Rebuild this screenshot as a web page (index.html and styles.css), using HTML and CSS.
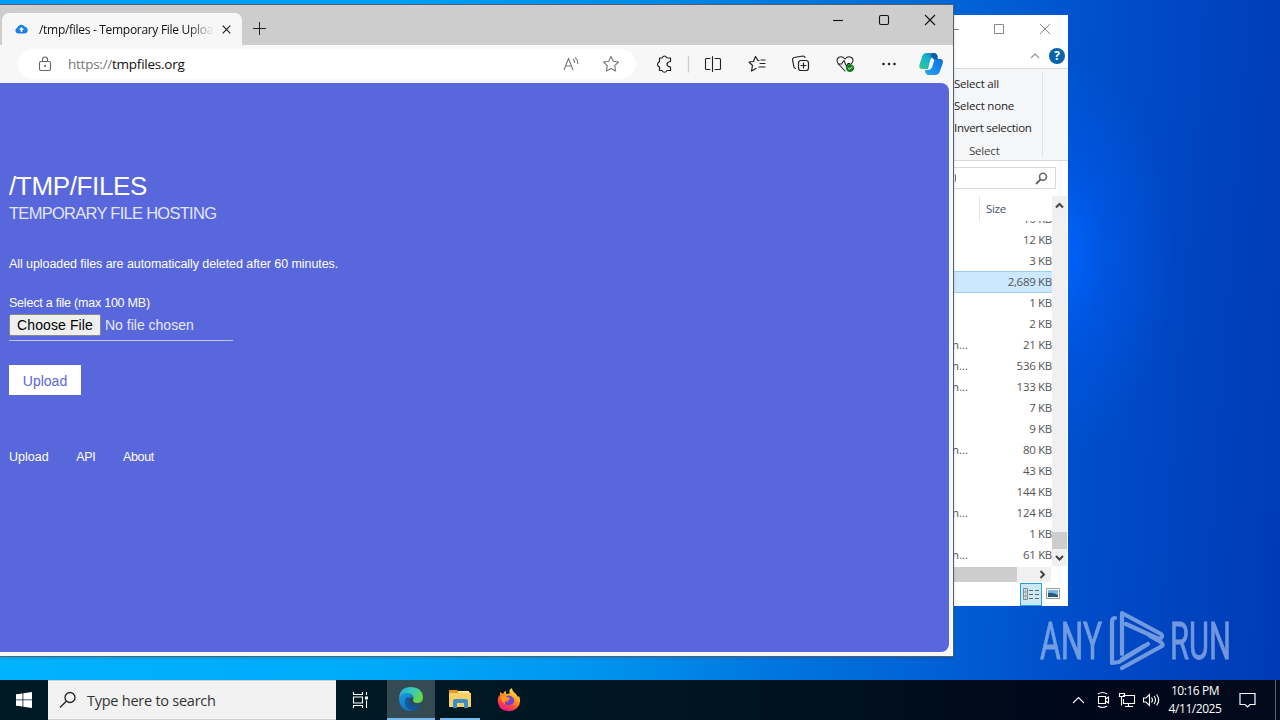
FILE: index.html
```html
<!DOCTYPE html>
<html lang="en">

<head>
  <meta charset="UTF-8" />
  <meta name="viewport" content="width=device-width, initial-scale=1.0" />
  <title>/tmp/files - Temporary File Upload</title>
  <link rel="stylesheet" href="styles.css">
</head>

<body>
  <div class="desktop">

    <!-- watermark -->
    <svg class="watermark" width="200" height="66" viewBox="0 0 200 66">
      <text x="5" y="51" textLength="62" lengthAdjust="spacingAndGlyphs">ANY</text>
      <g fill="none" stroke-width="4.200" stroke-linejoin="round" stroke-linecap="round">
        <path d="M87 46V5L126 26Q129 29 124 31L91 16" />
        <path d="M80 10Q77 10 77 14V55L84 54 113 36" />
        <path d="M87 60L127 38Q129 36 124 33L115 28M87 51L109 38" />
      </g>
      <text x="135" y="51" textLength="61" lengthAdjust="spacingAndGlyphs">RUN</text>
    </svg>

    <!-- file explorer -->
    <section class="explorer">
      <div class="explorer-title">
        <svg width="114" height="29" fill="none" stroke="#888">
          <path d="M0 14.500H5M40.500 9.500H49.500V18.500H40.500ZM86 9L96 19M96 9L86 19" />
        </svg>
      </div>
      <div class="explorer-tabs">
        <svg width="10" height="6" viewBox="0 0 10 6" fill="none" stroke="#999" stroke-width="1.300"><path d="M1 5L5 1L9 5" /></svg>
        <span class="help">?</span>
      </div>
      <div class="ribbon">
        <div class="ribbon-group">
          <span>Select all</span>
          <span>Select none</span>
          <span class="invert">Invert selection</span>
          <span class="group-name">Select</span>
        </div>
      </div>
      <div class="explorer-search">
        <div class="search-box">
          <span class="refresh"></span>
          <svg width="13" height="13" viewBox="0 0 13 13" fill="none" stroke="#666" stroke-width="1.600"><circle cx="8" cy="4.800" r="3.500" /><path d="M5.500 7.500L1 12" stroke-width="2" /></svg>
        </div>
      </div>
      <div class="file-area">
        <div class="files">
          <div class="files-head"><span>Size</span></div>
          <div class="files-list">
            <div class="row"><span></span><span>10 KB</span></div>
            <div class="row"><span></span><span>12 KB</span></div>
            <div class="row"><span></span><span>3 KB</span></div>
            <div class="row selected"><span></span><span>2,689 KB</span></div>
            <div class="row"><span></span><span>1 KB</span></div>
            <div class="row"><span></span><span>2 KB</span></div>
            <div class="row"><span>n...</span><span>21 KB</span></div>
            <div class="row"><span>n...</span><span>536 KB</span></div>
            <div class="row"><span>n...</span><span>133 KB</span></div>
            <div class="row"><span></span><span>7 KB</span></div>
            <div class="row"><span></span><span>9 KB</span></div>
            <div class="row"><span>n...</span><span>80 KB</span></div>
            <div class="row"><span></span><span>43 KB</span></div>
            <div class="row"><span></span><span>144 KB</span></div>
            <div class="row"><span>n...</span><span>124 KB</span></div>
            <div class="row"><span></span><span>1 KB</span></div>
            <div class="row"><span>n...</span><span>61 KB</span></div>
          </div>
        </div>
        <div class="vscroll">
          <svg width="15" height="17" fill="none" stroke="#444" stroke-width="2"><path d="M4 11.500L7.500 8L11 11.500" /></svg>
          <div class="vthumb"></div>
          <svg width="15" height="17" fill="none" stroke="#444" stroke-width="2"><path d="M4 7L7.500 10.500L11 7" /></svg>
        </div>
      </div>
      <div class="hscroll">
        <div class="hthumb"></div>
        <svg width="34" height="15" fill="none" stroke="#444" stroke-width="2"><path d="M23.500 4L27 7.500L23.500 11" /></svg>
      </div>
      <div class="explorer-status">
        <span class="view-btn">
          <svg width="18" height="14" viewBox="0 0 18 14" fill="none" stroke="#888"><path d="M1.500 1.500H5.500V12.500H1.500ZM1.500 5H5.500M1.500 9H5.500M3 3.300H4M3 7H4M3 11H4" /><path d="M7 3.500H11M13 3.500H17M7 7.500H11M13 7.500H17M7 11.500H11M13 11.500H17" stroke="#666" /></svg>
        </span>
        <svg width="14" height="12" viewBox="0 0 14 12"><path d="M.5.5H13.500V10.500H.5Z" fill="#fff" stroke="#999" /><path d="M2 2H12V9H2Z" fill="#7eb6e4" /><path d="M2 5Q6 4 12 7V9H2Z" fill="#285a78" /></svg>
      </div>
    </section>

    <!-- browser -->
    <section class="browser">
      <div class="tab-strip">
        <div class="tab">
          <svg class="favicon" width="13" height="12" viewBox="0 0 13 12"><path d="M3.200 10.500A3 3 0 0 1 2.300 4.700A4 4 0 0 1 9.700 3.800A3.400 3.400 0 0 1 10 10.500Z" fill="#1a80e5" /><path d="M6.500 4L9 6.800H7.300V9H5.700V6.800H4Z" fill="#fff" /></svg>
          <span class="tab-title">/tmp/files - Temporary File Upload</span>
          <svg class="tab-close" width="9" height="9" viewBox="0 0 9 9" stroke="#222" stroke-width="1.200"><path d="M.7.7L8.300 8.300M8.300.7L.7 8.300" /></svg>
        </div>
        <svg class="new-tab" width="15" height="15" stroke="#222" stroke-width="1"><path d="M7.500 1V14M1 7.500H14" /></svg>
        <svg class="window-buttons" width="124" height="30" fill="none" stroke="#111" stroke-width="1.100">
          <path d="M4 15.500H14" />
          <rect x="50.500" y="10.500" width="9" height="9" rx="1.500" />
          <path d="M96 10L106 20M106 10L96 20" />
        </svg>
      </div>

      <div class="toolbar">
        <div class="address">
          <svg class="lock" width="14" height="16" viewBox="0 0 14 16" fill="none" stroke="#666" stroke-width="1.100"><rect x="1.500" y="5.500" width="11" height="9" rx="1.500" /><path d="M4.500 5.500V3.500A2.500 2.500 0 0 1 9.500 3.500V5.500" /><circle cx="7" cy="10" r=".5" fill="#555" /></svg>
          <span class="url"><span>https://</span>tmpfiles.org</span>
          <svg class="read" width="17" height="16" viewBox="0 0 17 16" fill="none" stroke="#777" stroke-width="1.100"><path d="M2 14L6.500 2.500L11 14M3.500 10H9.500M11 3Q13 4.800 12.500 7M13 1.500Q16.500 4 15.500 8" /></svg>
          <svg class="star" width="18" height="18" viewBox="0 0 18 18" fill="none" stroke="#777" stroke-width="1.100" stroke-linejoin="round"><path d="M9 1.500L11.300 6.300L16.500 7L12.700 10.700L13.600 16L9 13.500L4.400 16L5.300 10.700L1.500 7L6.700 6.300Z" /></svg>
        </div>
        <svg class="tools" width="300" height="36" viewBox="0 0 300 36" fill="none" stroke="#222" stroke-width="1.200" stroke-linejoin="round" stroke-linecap="round">
          <path d="M13.500 12H16Q18.500 8 21 12H24.500V15.500Q21 16 21 18.200T24.500 21V24.500H21Q18.500 28 16 24.500H13.500V21Q9.500 18.500 13.500 15.500Z" />
          <path d="M42.500 10V26" stroke="#ccc" />
          <path d="M64 12.500H60.500Q59.500 12.500 59.500 13.500V22.500Q59.500 23.500 60.500 23.500H64M69 12.500H73.500Q74.500 12.500 74.500 13.500V22.500Q74.500 23.500 73.500 23.500H69M66.500 10.500V25.500" stroke-width="1.100" />
          <path d="M113 14.500H112L109.500 10.500L107.500 15.500L103 16L106.500 19.500L105.500 25L110 22.500M114 17.500H119M113 21H119M115 14H119" />
          <path d="M149.500 22.500Q148 22 147.800 20.500L146.500 13.500Q146.500 12 148 11.500L157 10Q158.500 10 159 11.500" />
          <rect x="152.500" y="14.500" width="10" height="10" rx="2.500" /><path d="M157.500 17V22M155 19.500H160" />
          <path d="M199 25L192.500 18Q189.500 14 192.500 11.500Q196 9.500 199 13Q202 9.500 205.500 11.500Q208.500 14 205.500 17.500M192 18H195.500L198 14.500L200.500 20.500L202 17.500H204" stroke-width="1.050" />
          <circle cx="204" cy="22" r="3.600" fill="#107c1d" stroke="#107c1d" stroke-width="1" /><path d="M202.300 22L203.500 23.300L205.800 20.900" stroke="#fff" stroke-width="1" />
          <g fill="#222" stroke="none"><circle cx="237.500" cy="18" r="1.300" /><circle cx="243" cy="18" r="1.300" /><circle cx="248.500" cy="18" r="1.300" /></g>
        </svg>
        <svg class="copilot" width="24" height="24" viewBox="0 0 24 24">
          <defs>
            <linearGradient id="cpA" x1="0" y1="1" x2="1" y2="0"><stop offset="0" stop-color="#35c58d" /><stop offset=".5" stop-color="#18b6c8" /><stop offset="1" stop-color="#0876c9" /></linearGradient>
            <linearGradient id="cpB" x1="0" y1="1" x2="1" y2="0"><stop offset="0" stop-color="#27a8ef" /><stop offset="1" stop-color="#0b6be0" /></linearGradient>
          </defs>
          <path d="M8 1H15Q18 1 19 5H15Q12 5 11 9L9 17H3Q-1 17 1 11L3 5Q4 1 8 1Z" fill="url(#cpA)" />
          <path d="M16 23H10Q6 23 6 18H9Q12 18 13 14L15 7H21Q25 7 23.500 12L21 19Q20 23 16 23Z" fill="url(#cpB)" />
          <path d="M13 1H15Q18 1 19 7H14Q13 4 11 5Z" fill="#105ba8" />
          <path d="M13 8H15.500L13 15Q12 17.500 9.500 17Z" fill="#f3faff" />
        </svg>
      </div>

      <main class="page">
        <h1>/TMP/FILES</h1>
        <h2>TEMPORARY FILE HOSTING</h2>
        <p class="notice">All uploaded files are automatically deleted after 60 minutes.</p>
        <form class="upload-form">
          <label for="file">Select a file (max 100 MB)</label>
          <div class="file-input">
            <button type="button" id="file" class="choose">Choose File</button>
            <span>No file chosen</span>
          </div>
          <button type="button" class="upload">Upload</button>
        </form>
        <nav class="links">
          <a>Upload</a>
          <a>API</a>
          <a>About</a>
        </nav>
      </main>
    </section>
  </div>

  <footer class="taskbar">
    <div class="start">
      <svg width="16" height="16" viewBox="0 0 16 16" fill="#fff"><path d="M0 2.300L6.500 1.400V7.500H0ZM7.300 1.200L16 0V7.500H7.300ZM0 8.300H6.500V14.600L0 13.700ZM7.300 8.300H16V16L7.300 14.800Z" /></svg>
    </div>
    <div class="task-search">
      <svg width="18" height="18" viewBox="0 0 18 18" fill="none" stroke="#222" stroke-width="1.300"><circle cx="11" cy="6.500" r="5" /><path d="M7.300 10.200L1 16.500" /></svg>
      <span>Type here to search</span>
    </div>
    <div class="task task-view">
      <svg width="17" height="16" viewBox="0 0 17 16" fill="none" stroke="#fff" stroke-width="1.100"><path d="M1.500 0V2.500H10.500V0M1.500 16V13.500H10.500V16M1.500 5H10.500V11H1.500ZM14.500 0V3M14.500 8.500V16" /><path d="M13 4.500H16V7.500H13Z" fill="#fff" stroke="none" /></svg>
    </div>
    <div class="task edge">
      <svg width="26" height="26" viewBox="0 0 26 26">
        <defs>
          <linearGradient id="eg" x1="0" y1="0" x2="1" y2=".5"><stop offset="0" stop-color="#23a9df" /><stop offset=".5" stop-color="#36c8bd" /><stop offset="1" stop-color="#68d84b" /></linearGradient>
          <linearGradient id="eb" x1="0" y1="0" x2="1" y2="1"><stop offset="0" stop-color="#1b9ce4" /><stop offset="1" stop-color="#0b5ca8" /></linearGradient>
        </defs>
        <path d="M1 12Q2 1 13 1Q24 1 25 11Q25 17 19 17Q15 17 15 14Q17 9 11 8Q4 7 1 12Z" fill="url(#eg)" />
        <path d="M1 13Q2 7 9 7Q15 7 15 12Q12 10 11 14Q11 20 18 20Q21 20 23 18Q20 25 13 25Q2 25 1 13Z" fill="url(#eb)" />
        <path d="M9 11Q5 15 8 20T17 24Q21 23 23 18Q18 21 14 18Q10 15 13 12Z" fill="#124f8f" opacity=".75" />
      </svg>
    </div>
    <div class="task folder">
      <svg width="22" height="20" viewBox="0 0 22 20"><path d="M0 1H8L10 3H21V8H0Z" fill="#e79b17" /><path d="M0 4H22V18H0Z" fill="#f9cf66" /><path d="M9 2H20V4H9Z" fill="#ffe49b" /><path d="M4 19V12Q4 10 6 10H17Q19 10 19 12V19H15V14H8V19Z" fill="#3a8fc8" /></svg>
    </div>
    <div class="task firefox">
      <svg width="24" height="24" viewBox="0 0 24 24">
        <defs><linearGradient id="ff" x1=".8" y1="0" x2=".3" y2="1"><stop offset="0" stop-color="#fff44d" /><stop offset=".4" stop-color="#ffa31c" /><stop offset=".7" stop-color="#ff4a3d" /><stop offset="1" stop-color="#e31587" /></linearGradient></defs>
        <path d="M3 4L6 6Q7 3 9 3L9 6Q12 6 13 5Q11 2 15 0Q15 3 19 6L21 9L22 8Q25 15 20 20Q16 24 11 23Q3 23 1 15Q0 9 3 7Z" fill="url(#ff)" />
        <path d="M9 8Q14 6 17 11Q18 16 13 17Q8 18 7 14Q11 15 12 12Q9 12 8 10Z" fill="#7542cf" />
        <path d="M4 9Q7 6 10 9L13 10Q12 13 9 12Q7 14 8 16Q4 14 4 9Z" fill="#ff981c" />
      </svg>
    </div>
    <div class="tray">
      <svg width="96" height="24" viewBox="0 0 96 24" fill="none" stroke="#fff" stroke-width="1.100">
        <path d="M5 15L10.500 9.500L16 15" />
        <path d="M30.500 8.500H37.500V15.500H30.500ZM37.500 11L40.500 9V15L37.500 13M30 6Q34.500 3 39 6M30 18Q34.500 21 39 18" />
        <path d="M55 7.500H66.500V15.500H55.500V11M60.500 15.500V18.500M57 18.500H65M51.500 5.500H56.500V8.500H51.500ZM53.500 8.500V17.500" />
        <path d="M75.500 10H78L81.500 6.500V17.500L78 14H75.500ZM83.500 9.500Q85.500 12 83.500 14.500M86 8Q89 12 86 16M88.500 6.500Q93 12 88.500 17.500" />
      </svg>
      <div class="clock">
        <span>10:16 PM</span>
        <span>4/11/2025</span>
      </div>
      <svg class="notify" width="17" height="17" viewBox="0 0 17 17" fill="none" stroke="#fff" stroke-width="1.200"><path d="M1 1.500H16V12.500H11L8.500 15L6 12.500H1Z" /></svg>
      <span class="show-desktop"></span>
    </div>
  </footer>
</body>

</html>
```
FILE: styles.css
```css
* {
  box-sizing: border-box;
}

body {
  margin: 0;
  width: 1280px;
  height: 720px;
  overflow: hidden;
  font-family: "Open Sans", "Noto Sans", sans-serif;
  font-size: 12px;
  display: flex;
  flex-direction: column;
}

svg {
  display: block;
  flex-shrink: 0;
}

.desktop {
  position: relative;
  height: 680px;
  background:
    radial-gradient(ellipse 120px 200px at 1055px 255px, #0066ff 0%, rgba(0, 88, 235, 0.6) 45%, rgba(0, 75, 210, 0) 100%),
    linear-gradient(to right, rgba(0, 184, 255, 0.8), rgba(0, 150, 240, 0) 60%) 0 100% / 100% 30px no-repeat,
    linear-gradient(94deg, #009dff 0%, #00a0f8 30%, #008cea 48%, #0068d8 70%, #004fcb 83%, #0043bf 92%, #003ab4 100%);
}

.watermark {
  position: absolute;
  left: 1035px;
  top: 608px;
  overflow: visible;
  opacity: 0.62;
  stroke: #b9cdf0;
}

.watermark text {
  font-family: "Roboto", sans-serif;
  font-size: 51px;
  font-weight: 400;
  fill: #b9cdf0;
  stroke-width: 0.8;
}

/* file explorer */
.explorer {
  position: absolute;
  left: 954px;
  top: 15px;
  width: 114px;
  height: 591px;
  overflow: hidden;
  background-color: #fff;
  display: flex;
  flex-direction: column;
}

.explorer-title {
  height: 29px;
}

.explorer-tabs {
  height: 25px;
  padding-right: 3px;
  border-bottom: 1px solid #d9dadb;
  display: flex;
  justify-content: flex-end;
  align-items: center;
  gap: 9px;
}

.help {
  width: 16px;
  height: 16px;
  border-radius: 50%;
  background-color: #0a63ad;
  color: #fff;
  font-weight: 700;
  line-height: 16px;
  text-align: center;
}

.ribbon {
  height: 92px;
  padding: 3px 0;
  background-color: #f5f6f7;
  border-bottom: 1px solid #d9dadb;
}

.ribbon-group {
  width: 89px;
  height: 85px;
  border-right: 1px solid #e0e1e2;
  display: flex;
  flex-direction: column;
  font-size: 11.5px;
  line-height: 22px;
  letter-spacing: -0.2px;
  color: #222;
  white-space: nowrap;
  padding-top: 1px;
}

.invert {
  letter-spacing: -0.28px;
}

.group-name {
  padding-left: 15px;
  line-height: 24px;
  color: #444;
}

.explorer-search {
  height: 35px;
  padding-top: 6px;
}

.search-box {
  width: 102px;
  height: 22px;
  border: 1px solid #d9d9d9;
  border-left: none;
  padding-right: 7px;
  display: flex;
  align-items: center;
  justify-content: space-between;
}

.refresh {
  width: 2px;
  height: 8px;
  border-right: 1px solid #666;
  border-radius: 0 4px 4px 0;
}

.file-area {
  height: 370px;
  display: flex;
}

.files {
  width: 98px;
}

.files-head {
  height: 25px;
  padding-left: 25px;
}

.files-head span {
  display: block;
  border-left: 1px solid #e5e5e5;
  padding-left: 6px;
  line-height: 25px;
  font-size: 11.5px;
  letter-spacing: -0.3px;
  color: #44546a;
}

.files-list {
  height: 345px;
  overflow: hidden;
  display: flex;
  flex-direction: column;
}

.row {
  flex: 0 0 21px;
  display: flex;
  justify-content: space-between;
  line-height: 20px;
  font-size: 11.5px;
  letter-spacing: -0.3px;
  color: #555;
  white-space: nowrap;
}

.row:first-child {
  margin-top: -12px;
}

.row span:first-child {
  margin-left: -2px;
  letter-spacing: 0;
}

.row.selected {
  flex-basis: 22px;
  margin-top: -1px;
  width: 98px;
  background-color: #cce8ff;
  border: 1px solid #99d1f5;
  border-width: 1px 0;
  line-height: 20px;
}

.vscroll {
  width: 15px;
  background-color: #f0f0f0;
  display: flex;
  flex-direction: column;
}

.vthumb {
  height: 17px;
  margin-top: auto;
  background-color: #cdcdcd;
}

.hscroll {
  width: 97px;
  height: 15px;
  margin-top: 1px;
  background-color: #f0f0f0;
  display: flex;
}

.hthumb {
  width: 63px;
  background-color: #cdcdcd;
}

.explorer-status {
  height: 24px;
  padding-right: 8px;
  display: flex;
  justify-content: flex-end;
  align-items: center;
  gap: 4px;
}

.view-btn {
  width: 22px;
  height: 23px;
  border: 1px solid #26a0da;
  background-color: #cbe8f6;
  display: flex;
  align-items: center;
  justify-content: center;
}

/* browser window */
.browser {
  position: absolute;
  left: 0;
  top: 4px;
  width: 954px;
  height: 653px;
  background-color: #f7f7f7;
  border: 1px solid #4d6173;
  border-left: none;
  box-shadow: 0 1px 3px rgba(0, 0, 0, 0.15);
}

.tab-strip {
  height: 40px;
  padding: 8px 0 0 2px;
  background-color: #cdcdcd;
  display: flex;
}

.tab {
  width: 240px;
  height: 32px;
  padding: 0 11px 0 13px;
  border-radius: 7px 7px 0 0;
  background-color: #f7f7f7;
  display: flex;
  align-items: center;
}

.tab-title {
  width: 175px;
  margin-left: 11px;
  overflow: hidden;
  white-space: nowrap;
  color: #111;
  letter-spacing: -0.3px;
  -webkit-mask-image: linear-gradient(to right, #000 85%, transparent);
  mask-image: linear-gradient(to right, #000 85%, transparent);
}

.tab-close {
  margin-left: 8px;
}

.new-tab {
  margin: 8px 0 0 10px;
}

.window-buttons {
  margin: -8px 0 0 auto;
}

.toolbar {
  height: 38px;
  padding-left: 18px;
  display: flex;
  align-items: center;
}

.address {
  width: 618px;
  height: 30px;
  padding: 0 16px 0 20px;
  border-radius: 15px;
  background-color: #fff;
  display: flex;
  align-items: center;
}

.url {
  margin-left: 16px;
  font-size: 13.500px;
  letter-spacing: -0.25px;
  color: #111;
}

.url span {
  color: #777;
}

.read {
  margin-left: auto;
}

.star {
  margin-left: 23px;
}

.tools {
  margin-left: 10px;
  margin-right: -27px;
}

/* page content */
.page {
  width: 949px;
  height: 569px;
  padding: 87px 9px 0;
  border-radius: 0 8px 8px 0;
  background-color: #5967dc;
  color: #fff;
  font-family: "Liberation Sans", Arial, sans-serif;
  font-size: 12.5px;
}

h1 {
  margin: 0;
  font-size: 26px;
  font-weight: 400;
  line-height: 32px;
  letter-spacing: -0.35px;
}

h2 {
  margin: 0;
  font-size: 16.5px;
  font-weight: 400;
  line-height: 23px;
  letter-spacing: -0.72px;
  color: #e2e6ff;
}

.notice {
  margin: 31px 0 0;
  line-height: 16px;
  letter-spacing: -0.07px;
}

.upload-form {
  margin-top: 23px;
  display: flex;
  flex-direction: column;
  align-items: flex-start;
}

.upload-form label {
  line-height: 16px;
  letter-spacing: -0.22px;
}

.file-input {
  width: 224px;
  height: 30px;
  border-bottom: 1px solid #bcc7f2;
  padding-top: 3px;
  display: flex;
  align-items: flex-start;
  gap: 4px;
  font-size: 14px;
  line-height: 22px;
  color: #e6eaff;
}

.choose {
  width: 92px;
  height: 22px;
  padding: 0;
  border: 1px solid #888;
  border-radius: 2px;
  background-color: #efefef;
  color: #000;
  font: 14px "Liberation Sans", Arial, sans-serif;
  letter-spacing: 0.1px;
}

.upload {
  width: 72px;
  height: 30px;
  margin-top: 24px;
  padding-top: 2px;
  border: none;
  background-color: #fff;
  color: #5967dc;
  font: 14px "Liberation Sans", Arial, sans-serif;
}

.links {
  margin-top: 54px;
  display: flex;
  gap: 27.5px;
  line-height: 16px;
}

.links a + a {
  letter-spacing: -0.3px;
}

/* taskbar */
.taskbar {
  height: 40px;
  background: linear-gradient(to right, #001a24, #001722 50%, #00071a 85%, #030a1b);
  display: flex;
  color: #fff;
}

.start {
  width: 48px;
  display: flex;
  align-items: center;
  justify-content: center;
}

.task-search {
  width: 288px;
  padding-left: 11px;
  background-color: #f2f2f2;
  border: 1px solid #cfcfcf;
  border-width: 1px 0;
  display: flex;
  align-items: center;
  gap: 10px;
  color: #333;
  font-size: 14.500px;
  letter-spacing: -0.25px;
}

.task {
  width: 48px;
  display: flex;
  align-items: center;
  justify-content: center;
}

.task-view {
  width: 51px;
  padding-right: 2px;
}

.edge {
  background-color: #344b54;
  border-bottom: 2px solid #76b9ed;
}

.folder {
  width: 40px;
  margin: 0 5px;
  border-bottom: 2px solid #76b9ed;
}

.tray {
  margin-left: auto;
  display: flex;
  align-items: center;
}

.clock {
  width: 62px;
  display: flex;
  flex-direction: column;
  align-items: center;
  line-height: 18px;
  letter-spacing: -0.45px;
}

.notify {
  margin-left: 13px;
}

.show-desktop {
  width: 5px;
  height: 40px;
  margin-left: 19px;
  border-left: 1px solid #566;
}
```
